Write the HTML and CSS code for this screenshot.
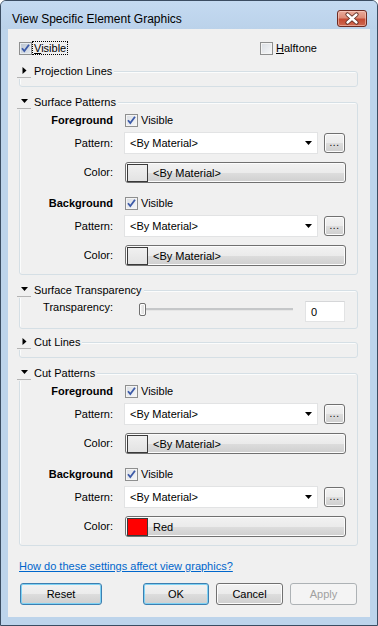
FILE: index.html
```html
<!DOCTYPE html>
<html>
<head>
<meta charset="utf-8">
<link rel="stylesheet" href="styles.css">
</head>
<body>
<div class="window">
  <div class="titlebar">
    <span class="title">View Specific Element Graphics</span>
    <div class="close">
      <svg width="28" height="15" viewBox="0 0 28 15">
        <path d="M9.5 3.5 L18.5 11.5 M18.5 3.5 L9.5 11.5" stroke="#5b2b22" stroke-width="4.2" stroke-linecap="round" fill="none"/>
        <path d="M9.5 3.5 L18.5 11.5 M18.5 3.5 L9.5 11.5" stroke="#ffffff" stroke-width="2.4" stroke-linecap="round" fill="none"/>
      </svg>
    </div>
  </div>
  <div class="client">
    <div class="toprow">
      <label class="chk">
        <span class="cb cb-hot"><svg width="11" height="11" viewBox="0 0 11 11"><path d="M2 5.2 L4.3 8 L9 1.8" stroke="#3c5aa8" stroke-width="1.8" fill="none"/></svg></span>
        <span class="focus"><u>V</u>isible</span>
      </label>
      <label class="chk">
        <span class="cb"></span>
        <span class="txt"><u>H</u>alftone</span>
      </label>
    </div>

    <div class="group collapsed">
      <div class="ghead"><span class="toggle"><svg width="5" height="7" viewBox="0 0 5 7"><path d="M0.5 0 L4.5 3.5 L0.5 7 Z" fill="#000"/></svg></span><span>Projection Lines</span></div>
    </div>

    <div class="group">
      <div class="ghead"><span class="toggle"><svg width="7" height="4" viewBox="0 0 7 4"><path d="M0 0 L7 0 L3.5 4 Z" fill="#000"/></svg></span><span>Surface Patterns</span></div>
      <div class="row subhead first">
        <span class="lbl bold">Foreground</span>
        <label class="chk in"><span class="cb"><svg width="11" height="11" viewBox="0 0 11 11"><path d="M2 5.2 L4.3 8 L9 1.8" stroke="#3c5aa8" stroke-width="1.8" fill="none"/></svg></span><span class="txt">Visible</span></label>
      </div>
      <div class="row pattern">
        <span class="lbl">Pattern:</span>
        <div class="combo"><span>&lt;By Material&gt;</span><svg width="7" height="4" viewBox="0 0 7 4"><path d="M0 0 L7 0 L3.5 4 Z" fill="#000"/></svg></div>
        <div class="btn dots">...</div>
      </div>
      <div class="row color">
        <span class="lbl">Color:</span>
        <div class="btn colorbtn"><span class="swatch"></span><span>&lt;By Material&gt;</span></div>
      </div>
      <div class="row subhead">
        <span class="lbl bold">Background</span>
        <label class="chk in"><span class="cb"><svg width="11" height="11" viewBox="0 0 11 11"><path d="M2 5.2 L4.3 8 L9 1.8" stroke="#3c5aa8" stroke-width="1.8" fill="none"/></svg></span><span class="txt">Visible</span></label>
      </div>
      <div class="row pattern">
        <span class="lbl">Pattern:</span>
        <div class="combo"><span>&lt;By Material&gt;</span><svg width="7" height="4" viewBox="0 0 7 4"><path d="M0 0 L7 0 L3.5 4 Z" fill="#000"/></svg></div>
        <div class="btn dots">...</div>
      </div>
      <div class="row color">
        <span class="lbl">Color:</span>
        <div class="btn colorbtn"><span class="swatch"></span><span>&lt;By Material&gt;</span></div>
      </div>
    </div>

    <div class="group trans">
      <div class="ghead"><span class="toggle"><svg width="7" height="4" viewBox="0 0 7 4"><path d="M0 0 L7 0 L3.5 4 Z" fill="#000"/></svg></span><span>Surface Transparency</span></div>
      <div class="row transrow">
        <span class="lbl">Transparency:</span>
        <div class="slider"><span class="thumb"></span><span class="track"></span></div>
        <div class="textbox">0</div>
      </div>
    </div>

    <div class="group collapsed after-trans">
      <div class="ghead"><span class="toggle"><svg width="5" height="7" viewBox="0 0 5 7"><path d="M0.5 0 L4.5 3.5 L0.5 7 Z" fill="#000"/></svg></span><span>Cut Lines</span></div>
    </div>

    <div class="group">
      <div class="ghead"><span class="toggle"><svg width="7" height="4" viewBox="0 0 7 4"><path d="M0 0 L7 0 L3.5 4 Z" fill="#000"/></svg></span><span>Cut Patterns</span></div>
      <div class="row subhead first">
        <span class="lbl bold">Foreground</span>
        <label class="chk in"><span class="cb"><svg width="11" height="11" viewBox="0 0 11 11"><path d="M2 5.2 L4.3 8 L9 1.8" stroke="#3c5aa8" stroke-width="1.8" fill="none"/></svg></span><span class="txt">Visible</span></label>
      </div>
      <div class="row pattern">
        <span class="lbl">Pattern:</span>
        <div class="combo"><span>&lt;By Material&gt;</span><svg width="7" height="4" viewBox="0 0 7 4"><path d="M0 0 L7 0 L3.5 4 Z" fill="#000"/></svg></div>
        <div class="btn dots">...</div>
      </div>
      <div class="row color">
        <span class="lbl">Color:</span>
        <div class="btn colorbtn"><span class="swatch"></span><span>&lt;By Material&gt;</span></div>
      </div>
      <div class="row subhead">
        <span class="lbl bold">Background</span>
        <label class="chk in"><span class="cb"><svg width="11" height="11" viewBox="0 0 11 11"><path d="M2 5.2 L4.3 8 L9 1.8" stroke="#3c5aa8" stroke-width="1.8" fill="none"/></svg></span><span class="txt">Visible</span></label>
      </div>
      <div class="row pattern">
        <span class="lbl">Pattern:</span>
        <div class="combo"><span>&lt;By Material&gt;</span><svg width="7" height="4" viewBox="0 0 7 4"><path d="M0 0 L7 0 L3.5 4 Z" fill="#000"/></svg></div>
        <div class="btn dots">...</div>
      </div>
      <div class="row color">
        <span class="lbl">Color:</span>
        <div class="btn colorbtn"><span class="swatch red"></span><span>Red</span></div>
      </div>
    </div>

    <a class="link" href="#">How do these settings affect view graphics?</a>

    <div class="buttons">
      <div class="btn pb default reset">Reset</div>
      <div class="btn pb default ok">OK</div>
      <div class="btn pb cancel">Cancel</div>
      <div class="btn pb disabled">Apply</div>
    </div>
  </div>
</div>
</body>
</html>
```

FILE: styles.css
```css
html, body {
  margin: 0;
  padding: 0;
  background: #ffffff;
}
body {
  font-family: "Liberation Sans", Arial, sans-serif;
  font-size: 11px;
  color: #000;
}
.window {
  width: 378px;
  height: 626px;
  box-sizing: border-box;
  border: 1px solid #3b4d62;
  border-radius: 6px 6px 0 0;
  background: #bdd4eb;
  display: flex;
  flex-direction: column;
  overflow: hidden;
}
.titlebar {
  height: 28px;
  flex: none;
  display: flex;
  align-items: flex-start;
  padding: 0 10px 0 11px;
  box-sizing: border-box;
  background: linear-gradient(#c4daf1, #bbd2ea);
}
.title {
  font-size: 12px;
  line-height: 14px;
  margin-top: 11px;
  color: #000;
}
.close {
  margin-left: auto;
  margin-top: 9px;
  width: 30px;
  height: 17px;
  box-sizing: border-box;
  border: 1px solid #6e2b22;
  border-radius: 3px;
  background: linear-gradient(#eaab9c 0%, #dd8b77 45%, #c54a33 55%, #cf6a52 100%);
  box-shadow: inset 0 0 0 1px rgba(255, 220, 210, 0.5);
  display: flex;
  align-items: center;
  justify-content: center;
}
.close svg { display: block; }

.client {
  flex: 1;
  margin: 0 7px 8px 7px;
  background: #f0f0f0;
  display: flex;
  flex-direction: column;
}

/* checkboxes */
.chk {
  display: flex;
  align-items: center;
  height: 16px;
}
.cb {
  width: 13px;
  height: 13px;
  box-sizing: border-box;
  border: 1px solid #8e8f8f;
  background: linear-gradient(135deg, #d9dde3 0%, #f7f8f9 100%);
  box-shadow: inset 0 0 0 1px #f4f4f4;
  flex: none;
  display: flex;
  align-items: center;
  justify-content: center;
}
.cb svg { display: block; }
.cb-hot {
  background: linear-gradient(135deg, #b9c3cf 0%, #e4e9ef 100%);
  box-shadow: inset 0 0 0 1px #e6ebf0;
}
.chk .txt { margin-left: 3px; line-height: 13px; }
.chk .focus {
  margin-left: 1px;
  padding: 0 1px;
  line-height: 12px;
  outline: 1px dotted #000;
  outline-offset: 0;
  border: 0;
}
.toprow {
  margin-top: 11px;
  padding-left: 11px;
  height: 16px;
  display: grid;
  grid-template-columns: 241px auto;
}

/* groups */
.group {
  margin: 15px 12px 0 11px;
  border: 1px solid #d5dfe5;
  border-radius: 3px;
  display: flex;
  flex-direction: column;
  padding-bottom: 8px;
  box-shadow: inset 1px 1px 0 #fbfcfc;
}
.group.collapsed { padding-bottom: 7px; }
.group.trans { padding-bottom: 6px; }
.group.after-trans { margin-top: 13px; }
.ghead {
  align-self: flex-start;
  display: flex;
  align-items: center;
  height: 16px;
  margin: -9px 0 0 -3px;
  padding-right: 2px;
  background: #f0f0f0;
  line-height: 13px;
}
.toggle {
  width: 14px;
  height: 15px;
  box-sizing: border-box;
  border-bottom: 1px solid #b4b4b4;
  margin-right: 3px;
  display: flex;
  align-items: center;
  justify-content: center;
  align-self: flex-start;
}
.toggle svg { display: block; }

.row {
  display: flex;
  align-items: center;
  padding-right: 11px;
}
.lbl {
  width: 93px;
  margin-right: 11px;
  text-align: right;
  flex: none;
  line-height: 13px;
}
.bold { font-weight: bold; }
.subhead { height: 16px; margin-top: 12px; }
.subhead.first { margin-top: 2px; }
.chk.in { margin-left: 1px; }
.pattern { height: 22px; margin-top: 4px; }
.color { height: 21px; margin-top: 8px; }

.combo {
  width: 194px;
  height: 22px;
  box-sizing: border-box;
  background: #fff;
  border: 1px solid #e2e3e4;
  display: flex;
  align-items: center;
  padding: 0 4px 0 5px;
  flex: none;
}
.combo span { flex: 1; }
.combo svg { display: block; margin-right: 1px; }

.btn {
  box-sizing: border-box;
  border: 1px solid #707070;
  border-radius: 3px;
  background: linear-gradient(#f2f2f2 0%, #ebebeb 50%, #dddddd 51%, #cfcfcf 100%);
  box-shadow: inset 0 0 0 1px #fcfcfc;
}
.dots {
  width: 21px;
  height: 20px;
  margin-left: 6px;
  font-size: 10px;
  line-height: 10px;
  display: flex;
  align-items: flex-end;
  justify-content: center;
  padding-bottom: 4px;
  letter-spacing: 0.5px;
}
.colorbtn {
  flex: 1;
  margin-left: 1px;
  height: 21px;
  display: flex;
  align-items: center;
  padding-left: 1px;
}
.swatch {
  width: 21px;
  height: 18px;
  box-sizing: border-box;
  border: 1px solid #3a3a3a;
  background: linear-gradient(#f0f0f0, #e3e3e3);
  margin-right: 5px;
  flex: none;
}
.swatch.red { background: #ff0000; }

.transrow {
  align-items: flex-start;
  margin-top: 3px;
  height: 21px;
}
.slider {
  margin-left: 15px;
  width: 154px;
  height: 13px;
  margin-top: 2px;
  display: flex;
  align-items: center;
}
.thumb {
  width: 7px;
  height: 13px;
  box-sizing: border-box;
  border: 1px solid #707070;
  border-radius: 2px;
  background: linear-gradient(90deg, #f5f5f5, #d8d8d8);
  box-shadow: inset 0 0 0 1px #fdfdfd;
  flex: none;
}
.track {
  flex: 1;
  height: 2px;
  background: #c5c7c9;
  border-bottom: 1px solid #e6e6e6;
  margin-top: -1px;
}
.textbox {
  margin-left: 12px;
  width: 40px;
  height: 21px;
  box-sizing: border-box;
  background: #fff;
  border: 1px solid #e2e3e4;
  border-top-color: #d5d6d8;
  padding: 4px 0 0 5px;
  line-height: 13px;
}

.link {
  align-self: flex-start;
  margin: 14px 0 0 11px;
  line-height: 13px;
  color: #0066cc;
  text-decoration: underline;
}

.buttons {
  margin-top: 10px;
  display: flex;
  padding: 0 13px 0 12px;
  height: 22px;
}
.pb {
  height: 22px;
  display: flex;
  align-items: center;
  justify-content: center;
  line-height: 13px;
}
.reset { width: 82px; }
.ok { width: 66px; margin-left: auto; }
.cancel { width: 67px; margin-left: 7px; }
.disabled {
  width: 67px;
  margin-left: 7px;
  color: #a0a0a0;
  border-color: #adb2b5;
  background: #f4f4f4;
  box-shadow: none;
}
.default {
  border-color: #3c7fb1;
  box-shadow: inset 0 0 0 1px #7fd2f4;
}
```
